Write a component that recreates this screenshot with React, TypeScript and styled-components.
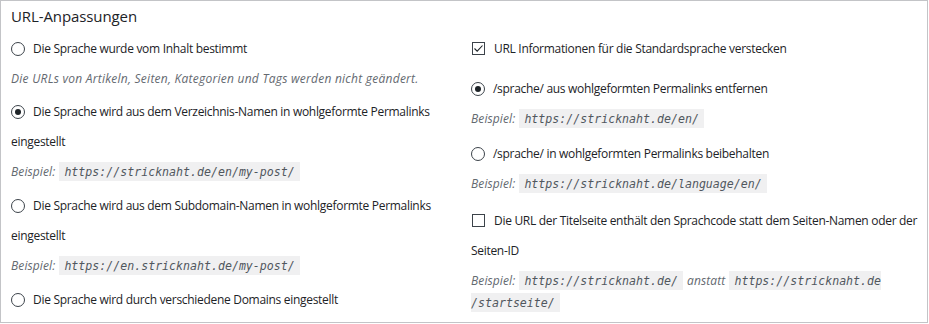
import styled, { createGlobalStyle, css } from "styled-components";

const GlobalStyle = createGlobalStyle`
  html, body {
    margin: 0;
    padding: 0;
    background: #fff;
  }
`;

const Panel = styled.section`
  box-sizing: border-box;
  width: 928px;
  height: 323px;
  border: 1px solid #c3c4c7;
  padding: 0 4px 0 10px;
  background: #fff;
  color: #1d2327;
  font-family: "Open Sans", "Noto Sans", sans-serif;
  font-size: 12px;
  overflow: hidden;
`;

const Title = styled.h2`
  margin: 0 0 3px;
  font-size: 15px;
  font-weight: 400;
  line-height: 30px;
  letter-spacing: -0.1px;
`;

const Columns = styled.div`
  display: grid;
  grid-template-columns: 450px 1fr;
  column-gap: 10px;
`;

const Column = styled.div`
  display: flex;
  flex-direction: column;
`;

const Option = styled.label<{ $gap?: number }>`
  display: block;
  margin-top: ${(p) => p.$gap ?? 0}px;
  line-height: 30px;
  letter-spacing: -0.3px;
`;

const Radio = styled.span<{ $checked?: boolean }>`
  display: inline-block;
  position: relative;
  box-sizing: border-box;
  width: 14px;
  height: 14px;
  margin: -2px 8px 0 0;
  border: 1px solid #3c434a;
  border-radius: 50%;
  vertical-align: middle;
  ${(p) =>
    p.$checked &&
    css`
      &::after {
        content: "";
        position: absolute;
        inset: 3px;
        border-radius: 50%;
        background: #1d2327;
      }
    `}
`;

const Box = styled.span`
  display: inline-flex;
  align-items: center;
  justify-content: center;
  box-sizing: border-box;
  width: 13px;
  height: 13px;
  margin: -2px 9px 0 1px;
  border: 1px solid #3c434a;
  vertical-align: middle;
`;

const Desc = styled.p<{ $italic?: boolean }>`
  margin: 4px 0 5px;
  line-height: 21px;
  color: #646970;
  font-style: ${(p) => (p.$italic ? "italic" : "normal")};
  letter-spacing: ${(p) => (p.$italic ? "0.25px" : "0")};
`;

const Label = styled.span`
  font-style: italic;
  color: #646970;
  letter-spacing: 0.1px;
`;

const Code = styled.code`
  padding: 3px 5px 2px;
  margin: 0 1px;
  background: #f0f0f1;
  color: #50575e;
  font-family: "DejaVu Sans Mono", "Liberation Mono", monospace;
  font-size: 11.6px;
  font-style: italic;
`;

const Check = ({ checked }: { checked?: boolean }) => (
  <Box>
    {checked && (
      <svg width="11" height="11" viewBox="0 0 11 11">
        <polyline points="1.5,5.5 4.2,8.2 9.5,2.5" fill="none" stroke="#1d2327" strokeWidth="1.1" />
      </svg>
    )}
  </Box>
);

const Example = ({ children }: { children: React.ReactNode }) => (
  <Desc>
    <Label>Beispiel:</Label> {children}
  </Desc>
);

export default function App() {
  return (
    <>
      <GlobalStyle />
      <Panel>
        <Title>URL-Anpassungen</Title>
        <Columns>
          <Column>
            <Option>
              <Radio />
              Die Sprache wurde vom Inhalt bestimmt
            </Option>
            <Desc $italic>Die URLs von Artikeln, Seiten, Kategorien und Tags werden nicht geändert.</Desc>
            <Option $gap={3}>
              <Radio $checked />
              Die Sprache wird aus dem Verzeichnis-Namen in wohlgeformte Permalinks eingestellt
            </Option>
            <Example>
              <Code>https://stricknaht.de/en/my-post/</Code>
            </Example>
            <Option $gap={3}>
              <Radio />
              Die Sprache wird aus dem Subdomain-Namen in wohlgeformte Permalinks eingestellt
            </Option>
            <Example>
              <Code>https://en.stricknaht.de/my-post/</Code>
            </Example>
            <Option $gap={3}>
              <Radio />
              Die Sprache wird durch verschiedene Domains eingestellt
            </Option>
          </Column>
          <Column>
            <Option>
              <Check checked />
              URL Informationen für die Standardsprache verstecken
            </Option>
            <Option $gap={10}>
              <Radio $checked />
              /sprache/ aus wohlgeformten Permalinks entfernen
            </Option>
            <Example>
              <Code>https://stricknaht.de/en/</Code>
            </Example>
            <Option $gap={4}>
              <Radio />
              /sprache/ in wohlgeformten Permalinks beibehalten
            </Option>
            <Example>
              <Code>https://stricknaht.de/language/en/</Code>
            </Example>
            <Option $gap={6}>
              <Check />
              Die URL der Titelseite enthält den Sprachcode statt dem Seiten-Namen oder der Seiten-ID
            </Option>
            <Example>
              <Code>https://stricknaht.de/</Code> <Label>anstatt</Label>{" "}
              <Code>
                https://stricknaht.de
                <wbr />
                /startseite/
              </Code>
            </Example>
          </Column>
        </Columns>
      </Panel>
    </>
  );
}
